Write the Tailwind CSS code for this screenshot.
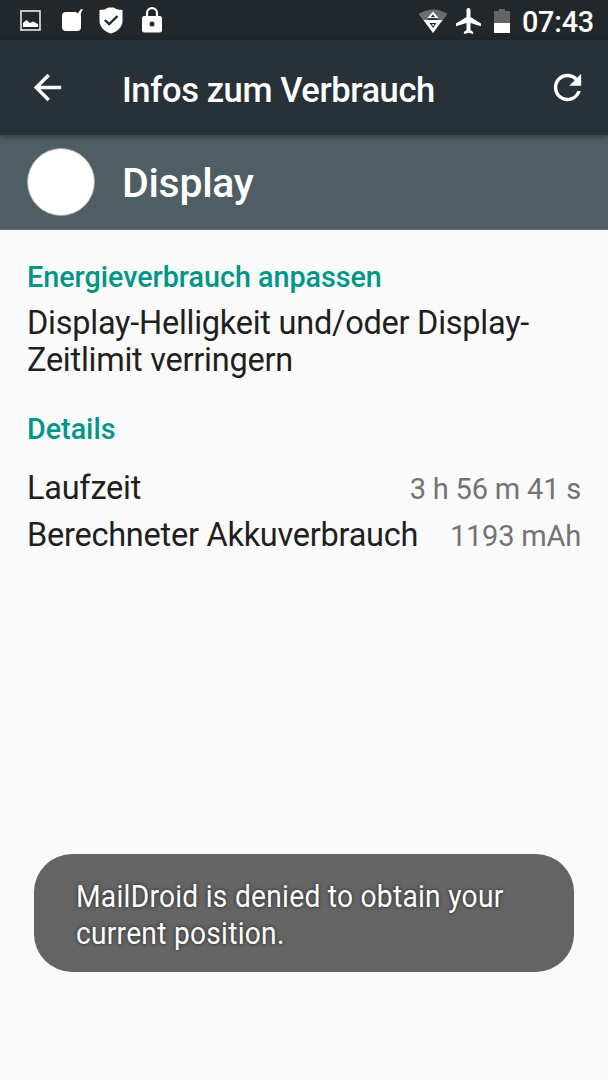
<!DOCTYPE html>
<html lang="de">

<head>
    <meta charset="UTF-8">
    <meta name="viewport" content="width=device-width, initial-scale=1.0">
    <title>Infos zum Verbrauch</title>
    <script src="https://cdn.jsdelivr.net/npm/@tailwindcss/browser@4"></script>
</head>

<body class="bg-[#fafafa] font-['Roboto',sans-serif] text-[#1f1f1f]">
    <div class="relative w-[608px] h-[1080px] overflow-hidden">

        <!-- Status bar -->
        <div class="h-10 bg-[#21272b] flex items-center justify-between pl-5 pr-[14px] text-white">
            <div class="flex items-center">
                <svg class="w-[21px] h-[21px]" viewBox="0 0 21 21">
                    <rect x="1" y="1" width="19" height="19" fill="none" stroke="#e8e8e8" stroke-width="1.6" />
                    <path d="M3 17V13L6.500 10L10 13L13 11.500L18 14V17Z" fill="#fff" />
                </svg>
                <svg class="w-[22px] h-[23px] ml-5" viewBox="0 0 22 23">
                    <rect x="1" y="3" width="19" height="19" rx="4" fill="#fff" />
                    <path d="M16.500 5L19.500 0.500L22 0L20.500 3L18.500 7Z" fill="#fff" />
                    <path d="M15 3L17.500 3L16.500 4.500Z" fill="#21272b" />
                </svg>
                <svg class="w-6 h-[27px] ml-4" viewBox="0 0 24 27">
                    <path d="M0.500 3Q6 3 9.500 0.500H14.500Q18 3 23.500 3V14C23.500 20 18 25 12 26.500C6 25 0.500 20 0.500 14Z" fill="#fff" />
                    <path d="M5.800 13L10.200 17.200L18.500 9" fill="none" stroke="#21272b" stroke-width="2.400" />
                </svg>
                <svg class="w-5 h-[26px] ml-[19px]" viewBox="0 0 20 26">
                    <path d="M5 10V6A5 4.800 0 0 1 15 6V10" fill="none" stroke="#fff" stroke-width="2.200" />
                    <rect x="0" y="9" width="20" height="16.500" rx="2.200" fill="#fff" />
                    <circle cx="10" cy="17" r="2.500" fill="#21272b" />
                </svg>
            </div>
            <div class="flex items-center">
                <svg class="w-[30px] h-6 mt-px" viewBox="0 0 30 24">
                    <path d="M0.500 5Q15 -4 29.500 5L15 24Z" fill="#6a6d6f" />
                    <path d="M5.500 11H24.500L15 24Z" fill="#fff" />
                    <path d="M15 2.500L20.500 9H9.500Z" fill="#fff" />
                    <path d="M15 5.500L17.200 8.200H12.800Z M10.500 9.500H19.500V11H10.500Z M11.500 14H18.500L15 19Z" fill="#21272b" />
                    <path d="M13.500 15.200H16.500L15 17.200Z" fill="#fff" />
                </svg>
                <svg class="w-[25px] h-[26px] ml-2 mt-px" viewBox="2 2 19 20" preserveAspectRatio="none">
                    <path d="M21 16v-2l-8-5V3.500c0-.83-.67-1.500-1.500-1.500S10 2.670 10 3.500V9l-8 5v2l8-2.500V19l-2 1.500V22l3.500-1 3.500 1v-1.500L13 19v-5.500l8 2.500z" fill="#fff" />
                </svg>
                <svg class="w-4 h-6 ml-[13px] mt-px" viewBox="0 0 16 24">
                    <path d="M0 2H5V0H11V2H16V15H0Z" fill="#626567" />
                    <rect x="0" y="14" width="16" height="10" fill="#fff" />
                </svg>
                <span class="ml-3 text-[28.800px] leading-10 font-medium pt-[3px] tracking-[-0.2px]">07:43</span>
            </div>
        </div>

        <!-- Toolbar -->
        <div class="relative z-10 h-[95px] bg-[#273137] flex items-center pl-[27px] pr-5 text-white shadow-[0_2px_6px_rgba(0,0,0,0.35)]">
            <svg class="w-[41px] h-[41px]" viewBox="0 0 24 24">
                <path d="M20 11H7.830l5.590-5.590L12 4l-8 8 8 8 1.410-1.410L7.830 13H20v-2z" fill="#fff" />
            </svg>
            <h1 class="ml-[54px] text-[34.500px] leading-10 font-medium pt-1 grow whitespace-nowrap tracking-[-0.4px]">Infos zum Verbrauch</h1>
            <svg class="w-[41px] h-[41px]" viewBox="0 0 24 24">
                <path d="M17.650 6.350C16.200 4.900 14.210 4 12 4c-4.420 0-7.990 3.580-7.990 8s3.570 8 7.990 8c3.730 0 6.840-2.550 7.730-6h-2.080c-.82 2.330-3.040 4-5.650 4-3.310 0-6-2.690-6-6s2.690-6 6-6c1.660 0 3.140.69 4.220 1.780L13 11h7V4l-2.350 2.350z" fill="#fff" />
            </svg>
        </div>

        <!-- Entry header -->
        <div class="h-[95px] bg-[#4f5d64] border-b border-[#5f6e74] flex items-center pl-[27px] text-white">
            <div class="size-[68px] rounded-full bg-white border border-[#aaa6a2]"></div>
            <h2 class="ml-[27px] text-[41px] leading-[48px] font-medium pt-px tracking-[-0.3px]">Display</h2>
        </div>

        <!-- Content -->
        <div class="px-[27px] pt-[30px]">
            <h3 class="text-[28.700px] leading-[34px] font-medium text-[#009688]">Energieverbrauch anpassen</h3>
            <p class="mt-[11px] text-[32.500px] leading-[37px] tracking-[-0.25px]">Display-Helligkeit und/oder Display-<br>Zeitlimit verringern</p>
            <h3 class="mt-[33px] text-[28.700px] leading-[34px] font-medium text-[#009688]">Details</h3>
            <div class="mt-[18px] h-[47px] flex items-center justify-between">
                <span class="text-[32.500px] tracking-[-0.25px] pt-0.5">Laufzeit</span>
                <span class="text-[29px] text-[#737373] pt-1 tracking-[-0.2px]">3 h 56 m 41 s</span>
            </div>
            <div class="h-[47px] flex items-center justify-between">
                <span class="text-[32.500px] tracking-[-0.25px] pt-0.5">Berechneter Akkuverbrauch</span>
                <span class="text-[29px] text-[#737373] pt-1 tracking-[-0.2px]">1193 mAh</span>
            </div>
        </div>

        <!-- Toast -->
        <div class="absolute left-[34px] top-[854px] w-[540px] h-[118px] rounded-[38px] bg-[#646464] pl-[42px] pt-6">
            <p class="origin-left scale-x-[0.88] whitespace-nowrap text-[32px] leading-[37px] tracking-[0.300px] text-white [text-shadow:0_0_4px_rgba(0,0,0,0.7)]">MailDroid is denied to obtain your<br>current position.</p>
        </div>
    </div>
</body>

</html>
